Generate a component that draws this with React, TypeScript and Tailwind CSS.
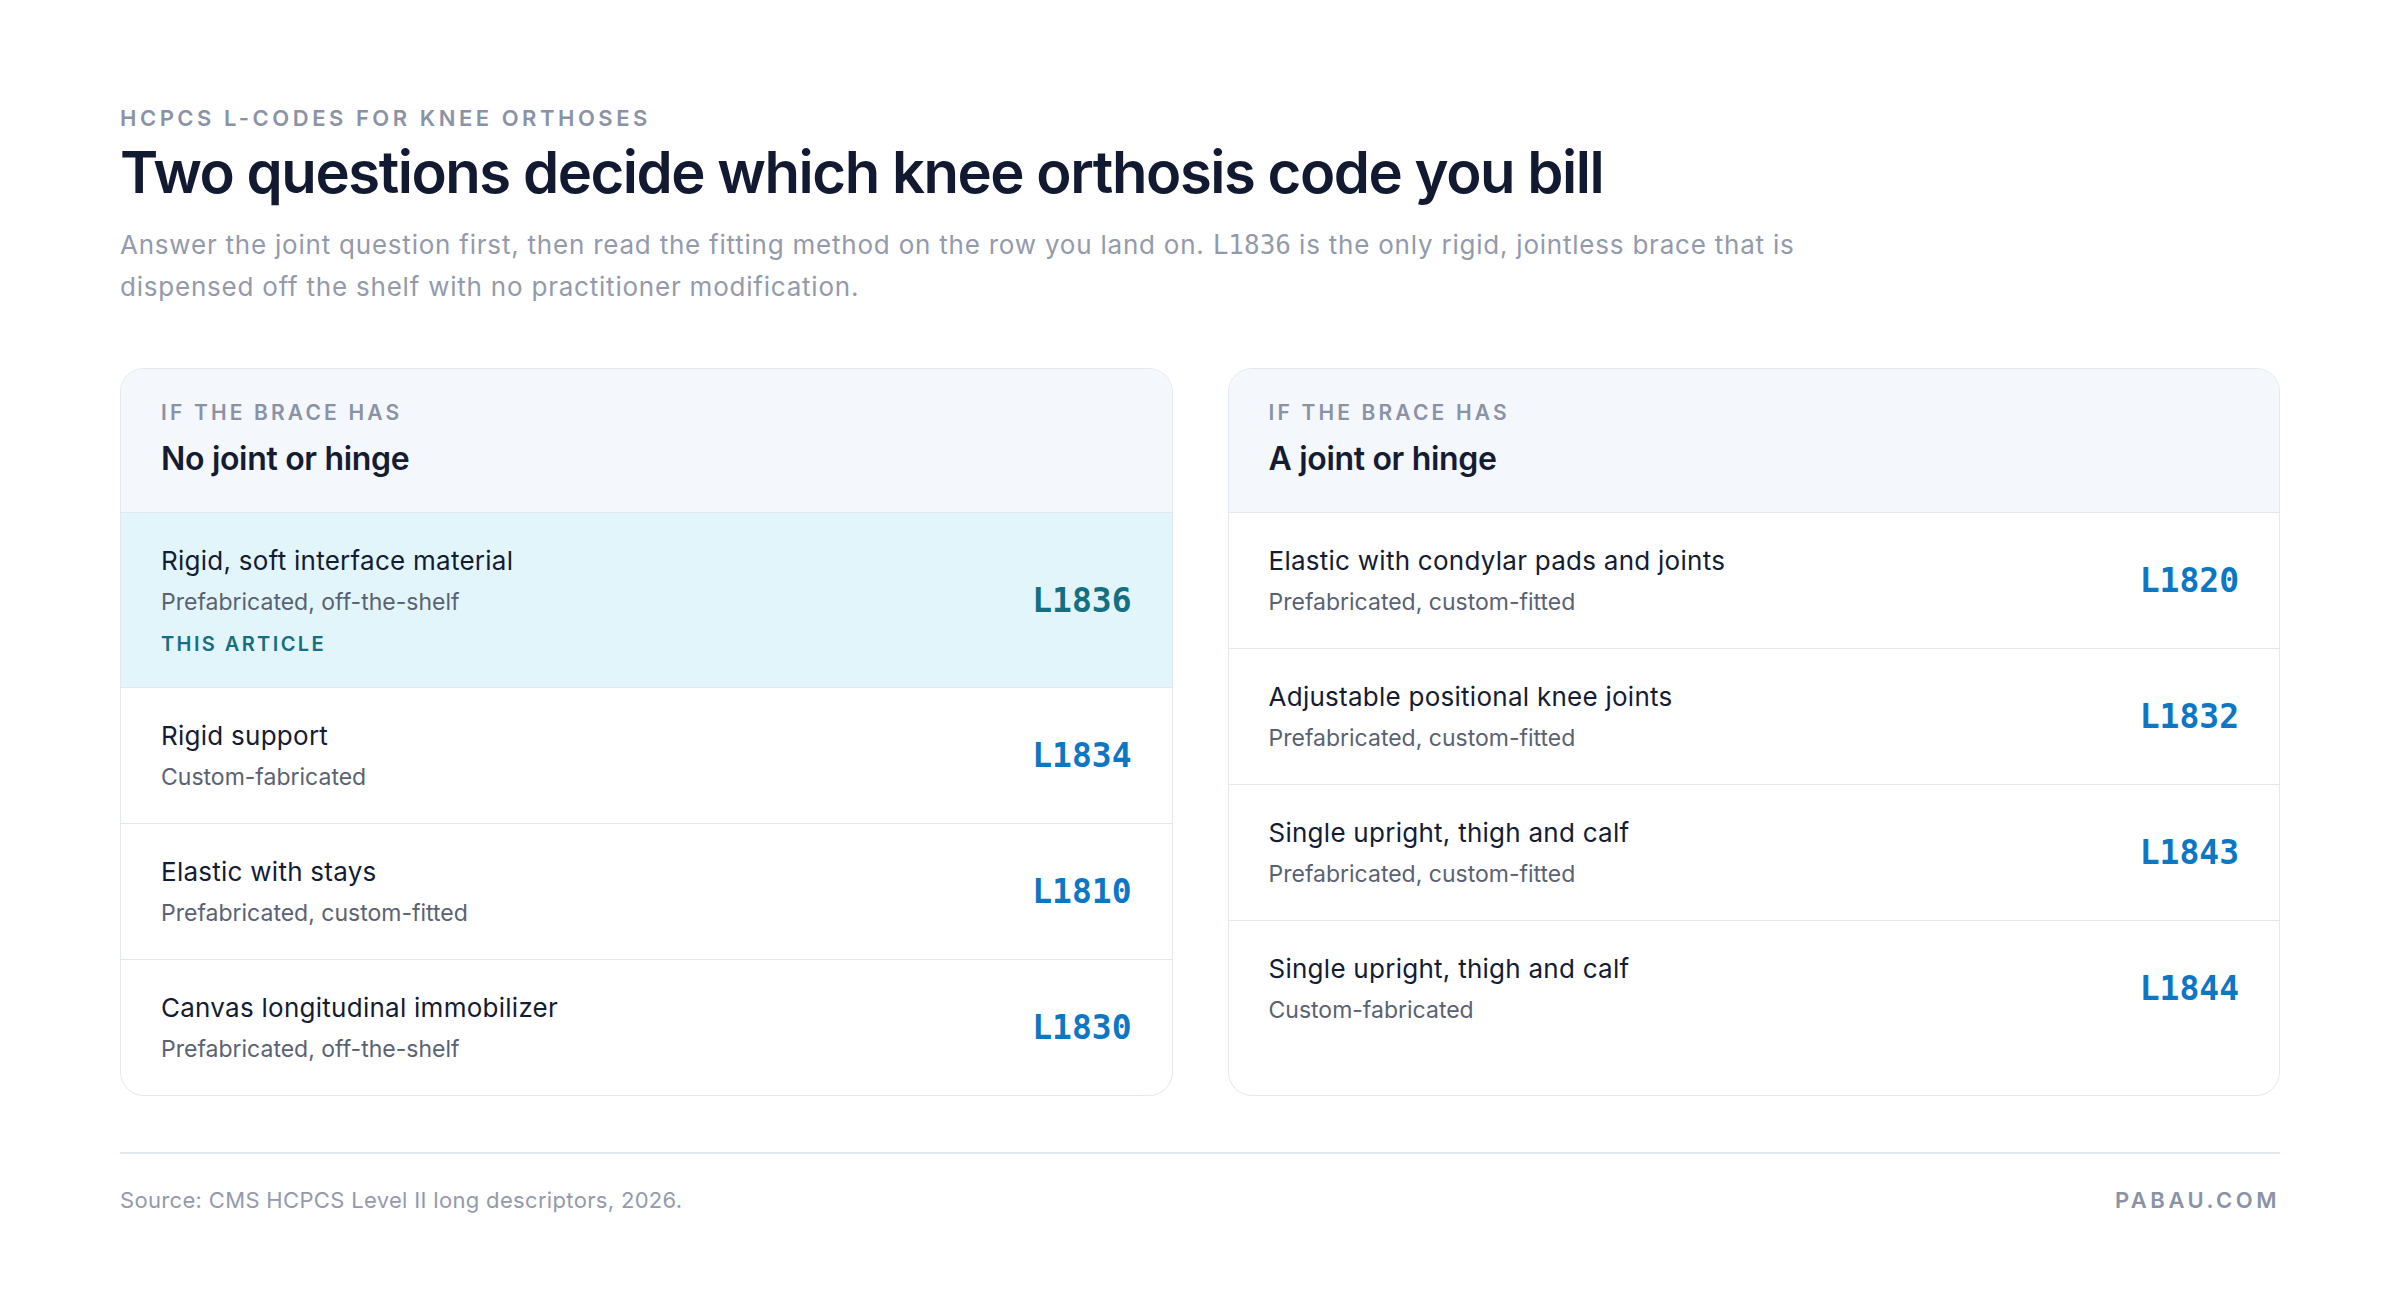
import React from 'react';

type Row = {
  title: string;
  fit: string;
  code: string;
  current?: boolean;
};

const noJoint: Row[] = [
  { title: 'Rigid, soft interface material', fit: 'Prefabricated, off-the-shelf', code: 'L1836', current: true },
  { title: 'Rigid support', fit: 'Custom-fabricated', code: 'L1834' },
  { title: 'Elastic with stays', fit: 'Prefabricated, custom-fitted', code: 'L1810' },
  { title: 'Canvas longitudinal immobilizer', fit: 'Prefabricated, off-the-shelf', code: 'L1830' },
];

const withJoint: Row[] = [
  { title: 'Elastic with condylar pads and joints', fit: 'Prefabricated, custom-fitted', code: 'L1820' },
  { title: 'Adjustable positional knee joints', fit: 'Prefabricated, custom-fitted', code: 'L1832' },
  { title: 'Single upright, thigh and calf', fit: 'Prefabricated, custom-fitted', code: 'L1843' },
  { title: 'Single upright, thigh and calf', fit: 'Custom-fabricated', code: 'L1844' },
];

const mono = { fontFamily: '"DejaVu Sans Mono", "Liberation Mono", monospace' };

// Une carte : en-tête + lignes de codes
const CodeCard = ({ heading, rows }: { heading: string; rows: Row[] }) => {
  return (
    <div className="flex flex-col overflow-hidden rounded-3xl border border-[#e3e8ef] bg-white">
      <div className="bg-[#f4f7fb] px-10 pt-[30px] pb-[33px]">
        <div className="text-[21px] leading-7 font-semibold tracking-[0.15em] text-[#8a93a6]">
          IF THE BRACE HAS
        </div>
        <div className="mt-3 text-[32px] leading-10 font-semibold tracking-[-0.01em] text-[#141c33]">
          {heading}
        </div>
      </div>
      {rows.map((row) => (
        <div
          key={row.code}
          className={`flex items-center justify-between border-t border-[#e3e8ef] px-10 pt-[30px] pb-[29px] ${
            row.current ? 'bg-[#e1f5fb]' : ''
          }`}
        >
          <div>
            <div className="text-[26px] leading-9 tracking-[0.01em] text-[#141c33]">{row.title}</div>
            <div className="mt-1.5 text-[23px] leading-[34px] text-[#5a6272]">{row.fit}</div>
            {row.current && (
              <div className="mt-[11px] text-[20px] leading-7 font-semibold tracking-[0.12em] text-[#156f82]">
                THIS ARTICLE
              </div>
            )}
          </div>
          <div
            className={`text-[33px] font-bold ${row.current ? 'text-[#156f82]' : 'text-[#0b77c5]'}`}
            style={mono}
          >
            {row.code}
          </div>
        </div>
      ))}
    </div>
  );
};

const App = () => {
  return (
    <div
      className="min-h-screen bg-white px-[120px] pt-[104px]"
      style={{ fontFamily: 'Inter, "Noto Sans", sans-serif' }}
    >
      <div className="text-[22px] leading-7 font-semibold tracking-[0.16em] text-[#8a93a6]">
        HCPCS L-CODES FOR KNEE ORTHOSES
      </div>
      <h1 className="mt-2 text-[58px] leading-[64px] font-semibold tracking-[-0.025em] text-[#111a30]">
        Two questions decide which knee orthosis code you bill
      </h1>
      <p className="mt-5 max-w-[1730px] text-[26px] leading-[41px] tracking-[0.03em] text-[#939aab]">
        Answer the joint question first, then read the fitting method on the row you land on.{' '}
        <span style={mono} className="tracking-normal">
          L1836
        </span>{' '}
        is the only rigid, jointless brace that is dispensed off the shelf with no practitioner
        modification.
      </p>

      <div className="mt-[61px] grid grid-cols-2 gap-[55px]">
        <CodeCard heading="No joint or hinge" rows={noJoint} />
        <CodeCard heading="A joint or hinge" rows={withJoint} />
      </div>

      <div className="mt-[56px] flex items-center justify-between border-t-2 border-[#e3e8ef] pt-[31px]">
        <div className="text-[22px] leading-[30px] tracking-[0.015em] text-[#939aab]">
          Source: CMS HCPCS Level II long descriptors, 2026.
        </div>
        <div className="text-[22px] leading-[30px] font-semibold tracking-[0.16em] text-[#8a93a6]">
          PABAU.COM
        </div>
      </div>
    </div>
  );
};

export default App;
